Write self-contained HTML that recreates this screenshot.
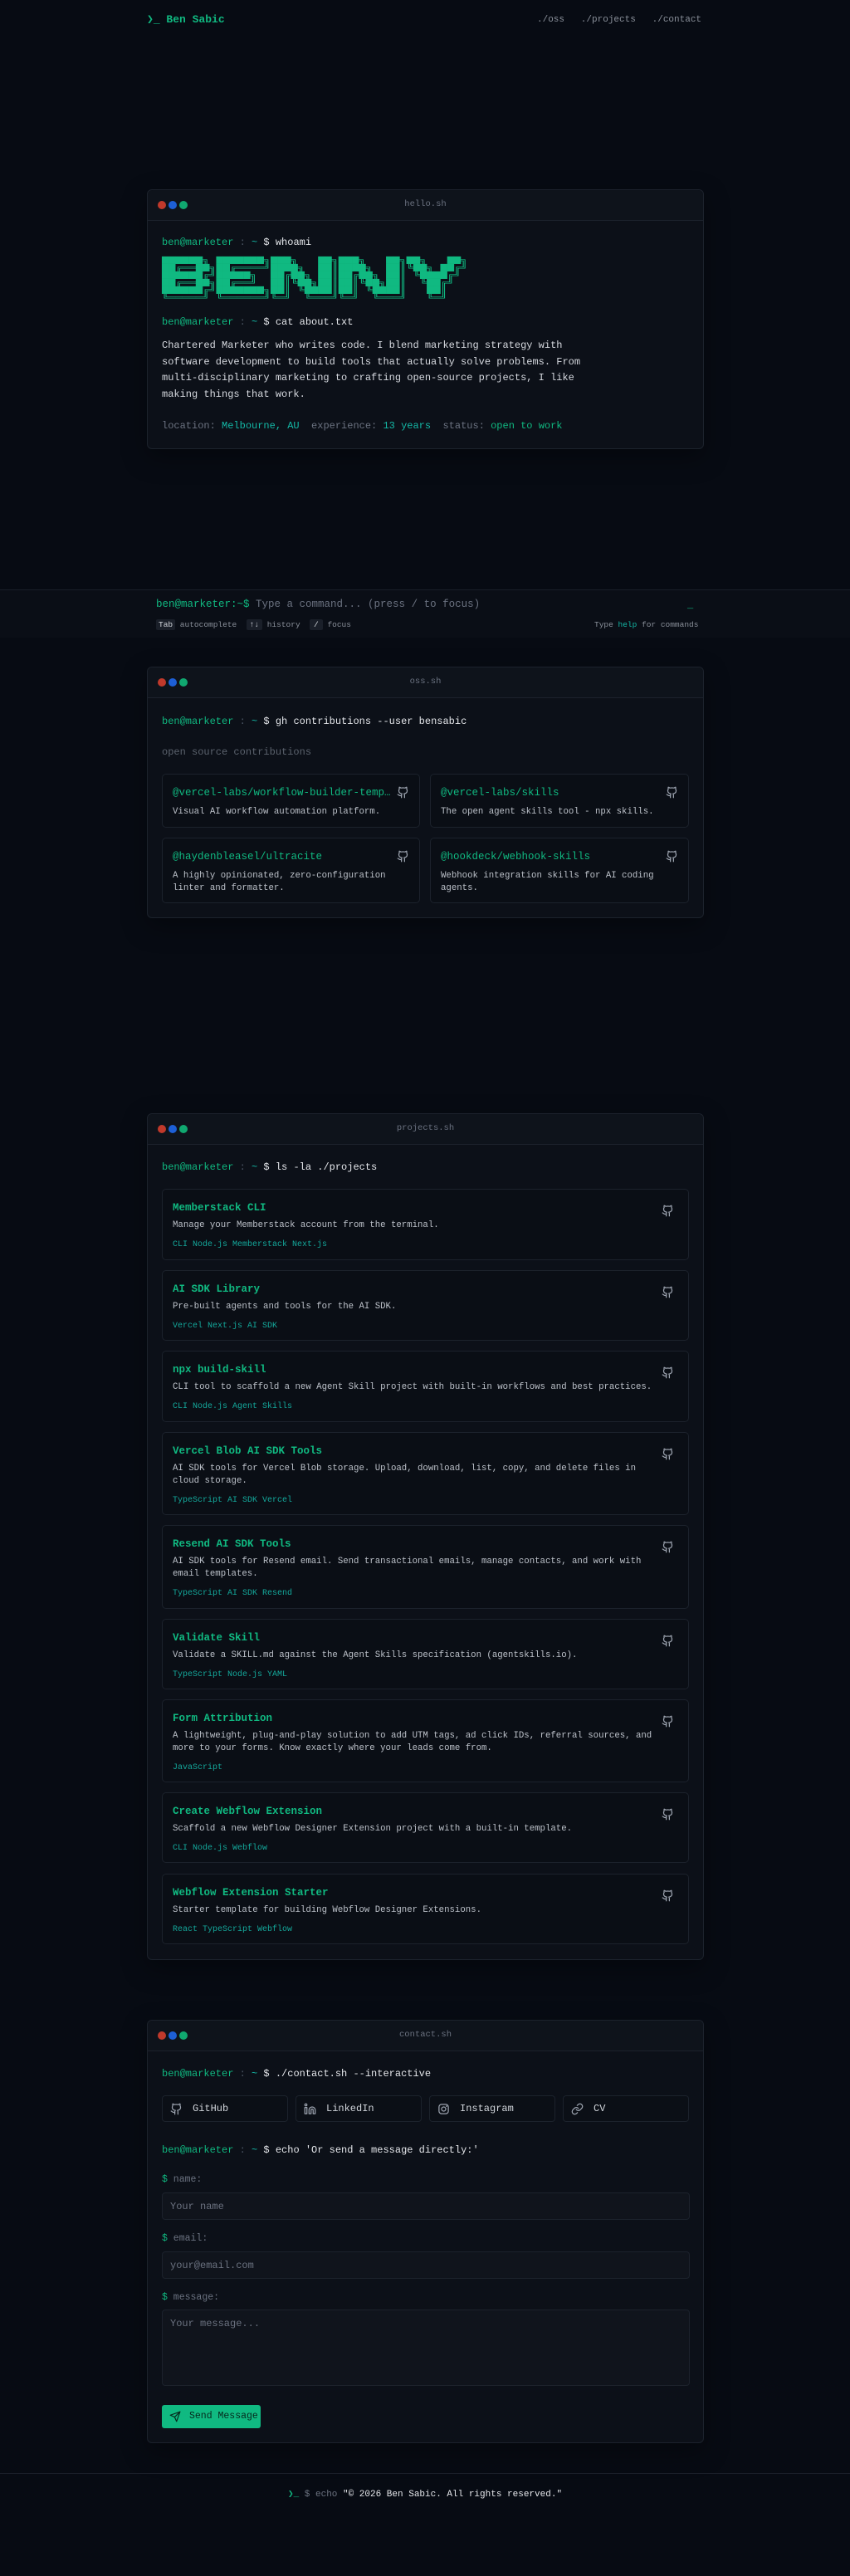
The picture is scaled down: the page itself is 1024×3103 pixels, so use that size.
<!DOCTYPE html>
<html><head><meta charset="utf-8">
<style>
*{box-sizing:border-box;margin:0;padding:0}
html,body{width:1024px;height:3103px;background:#070b13;overflow:hidden}
body{position:relative;font-family:"Liberation Mono","DejaVu Sans Mono",monospace;color:#d1d5db;font-size:12px}
.abs{position:absolute}
.g{color:#10b981}.t{color:#14b8a6}.m{color:#6b7280}.w{color:#e5e7eb}
.win{position:absolute;left:177px;width:671px;background:#0c1018;border:1px solid #1c222c;border-radius:6px;box-shadow:0 10px 30px rgba(0,0,0,.35)}
.bar{height:37px;border-bottom:1px solid #1c222c;background:#0e131b;border-radius:6px 6px 0 0;position:relative}
.dots{position:absolute;left:12px;top:13px;display:flex;gap:3px}
.dots i{width:10px;height:10px;border-radius:50%;display:block}
.bar .tt{position:absolute;left:0;right:0;top:11px;text-align:center;font-size:10.5px;color:#6b7280}
.pr{position:absolute;left:17px;font-size:12px;line-height:16px;white-space:pre}
.pr .s{color:#4b5563}
.card{position:absolute;border:1px solid #1c222c;border-radius:5px;background:#0a0e15}
.card .ti{position:absolute;left:12px;top:14px;font-size:12.5px;line-height:16px;font-weight:bold;color:#10b981;white-space:nowrap}
.card .de{position:absolute;left:12px;right:16px;top:36px;font-size:10.7px;line-height:15px;color:#bcc1c9}
.card .tg{position:absolute;left:12px;font-size:10px;line-height:14px;color:#14a89b}
.gh{position:absolute;width:15px;height:15px}
.lbl{position:absolute;left:17px;font-size:11.5px;color:#6b7280}
.lbl b{color:#10b981;font-weight:normal}
.inp{position:absolute;left:17px;width:636px;height:33px;border:1px solid #1c222c;border-radius:4px;background:#10141c;color:#6b7280;font-size:12px;padding:9px 9px}
.lnk{position:absolute;top:53px;width:152px;height:32px;border:1px solid #1c222c;border-radius:4px;background:#0b0f16;font-size:12px;color:#d1d5db;padding:8px 0 0 36px}
.lnk svg{position:absolute;left:9px;top:8px;width:15px;height:15px}
</style></head><body>

<div class="abs g" style="left:177px;top:16px;font-size:13px;font-weight:bold;line-height:16px">❯_ Ben Sabic</div>
<div class="abs m" style="left:647px;top:16px;font-size:11px;line-height:16px;color:#8b919b;white-space:pre">./oss   ./projects   ./contact</div>

<svg width="0" height="0" style="position:absolute"><defs>
<symbol id="ghi" viewBox="0 0 24 24"><g fill="none" stroke="#9ca3af" stroke-width="2" stroke-linecap="round" stroke-linejoin="round"><path d="M15 22v-4a4.8 4.8 0 0 0-1-3.5c3 0 6-2 6-5.5.08-1.25-.27-2.48-1-3.5.28-1.15.28-2.350 0-3.5 0 0-1 0-3 1.5-2.64-.5-5.36-.5-8 0C6 2 5 2 5 2c-.3 1.15-.3 2.35 0 3.5A5.403 5.403 0 0 0 4 9c0 3.5 3 5.5 6 5.5-.39.49-.68 1.05-.85 1.65-.17.6-.22 1.23-.15 1.85v4"/><path d="M9 18c-4.51 2-5-2-7-2"/></g></symbol>
</defs></svg>

<div class="win" style="top:228px;height:313px">
 <div class="bar"><div class="dots"><i style="background:#c0392b"></i><i style="background:#1d5fd6"></i><i style="background:#10a870"></i></div><div class="tt">hello.sh</div></div>
 <div class="pr" style="top:55px"><span class="g">ben@marketer</span><span class="s"> : </span><span class="t">~</span><span class="w"> $ whoami</span></div>
 <div style="position:absolute;left:17px;top:80px;height:54px;overflow:visible">
 <pre style="font-family:'DejaVu Sans Mono',monospace;font-size:13.6px;line-height:16px;color:#10b981;transform:scaleY(0.5625);transform-origin:top left;margin:0">██████╗ ███████╗███╗   ██╗███╗   ██╗██╗   ██╗
██╔══██╗██╔════╝████╗  ██║████╗  ██║╚██╗ ██╔╝
██████╔╝█████╗  ██╔██╗ ██║██╔██╗ ██║ ╚████╔╝ 
██╔══██╗██╔══╝  ██║╚██╗██║██║╚██╗██║  ╚██╔╝  
██████╔╝███████╗██║ ╚████║██║ ╚████║   ██║   
╚═════╝ ╚══════╝╚═╝  ╚═══╝╚═╝  ╚═══╝   ╚═╝   </pre></div>
 <div class="pr" style="top:151px"><span class="g">ben@marketer</span><span class="s"> : </span><span class="t">~</span><span class="w"> $ cat about.txt</span></div>
 <div style="position:absolute;left:17px;top:178px;width:530px;font-size:12px;line-height:19.5px;color:#d7dae0">Chartered Marketer who writes code. I blend marketing strategy with software development to build tools that actually solve problems. From multi-disciplinary marketing to crafting open-source projects, I like making things that work.</div>
 <div class="pr" style="top:276px;font-size:12px"><span class="m">location: </span><span class="t">Melbourne, AU</span><span class="m">  experience: </span><span class="t">13 years</span><span class="m">  status: </span><span class="g">open to work</span></div>
</div>

<div class="abs" style="left:0;top:710px;width:1024px;height:58px;background:#0a0e16;border-top:1px solid #1a1f29"></div>
<div class="abs" style="left:188px;top:720px;font-size:12.5px;line-height:16px;white-space:pre"><span class="g">ben@marketer:~$</span><span class="m"> Type a command... (press / to focus)</span></div>
<div class="abs g" style="left:828px;top:722px;font-size:12px">_</div>
<div class="abs" style="left:188px;top:745px;font-size:9.5px;line-height:16px;color:#8b919b;white-space:pre"><span style="background:#1a1f29;color:#d1d5db;padding:1px 3px;border-radius:2px">Tab</span> autocomplete  <span style="background:#1a1f29;color:#d1d5db;padding:1px 4px;border-radius:2px">↑↓</span> history  <span style="background:#1a1f29;color:#d1d5db;padding:1px 5px;border-radius:2px">/</span> focus</div>
<div class="abs" style="left:716px;top:745px;font-size:9.5px;line-height:16px;color:#8b919b;white-space:pre">Type <span class="t">help</span> for commands</div>

<div class="win" style="top:803px;height:303px">
 <div class="bar"><div class="dots"><i style="background:#c0392b"></i><i style="background:#1d5fd6"></i><i style="background:#10a870"></i></div><div class="tt">oss.sh</div></div>
 <div class="pr" style="top:57px"><span class="g">ben@marketer</span><span class="s"> : </span><span class="t">~</span><span class="w"> $ gh contributions --user bensabic</span></div>
 <div class="pr m" style="top:94px;color:#5b626d">open source contributions</div>
 <div class="card" style="left:17px;top:128px;width:311px;height:65px"><div class="ti" style="font-weight:normal">@vercel-labs/workflow-builder-temp…</div><div class="de" style="top:38px;right:8px">Visual AI workflow automation platform.</div><svg class="gh" style="right:12px;top:14px"><use href="#ghi"/></svg></div>
 <div class="card" style="left:340px;top:128px;width:312px;height:65px"><div class="ti" style="font-weight:normal">@vercel-labs/skills</div><div class="de" style="top:38px;right:8px">The open agent skills tool - npx skills.</div><svg class="gh" style="right:12px;top:14px"><use href="#ghi"/></svg></div>
 <div class="card" style="left:17px;top:205px;width:311px;height:79px"><div class="ti" style="font-weight:normal">@haydenbleasel/ultracite</div><div class="de" style="top:38px;right:8px">A highly opinionated, zero-configuration linter and formatter.</div><svg class="gh" style="right:12px;top:14px"><use href="#ghi"/></svg></div>
 <div class="card" style="left:340px;top:205px;width:312px;height:79px"><div class="ti" style="font-weight:normal">@hookdeck/webhook-skills</div><div class="de" style="top:38px;right:40px">Webhook integration skills for AI coding agents.</div><svg class="gh" style="right:12px;top:14px"><use href="#ghi"/></svg></div>
</div>

<div class="win" style="top:1341px;height:1020px">
 <div class="bar"><div class="dots"><i style="background:#c0392b"></i><i style="background:#1d5fd6"></i><i style="background:#10a870"></i></div><div class="tt">projects.sh</div></div>
 <div class="pr" style="top:56px"><span class="g">ben@marketer</span><span class="s"> : </span><span class="t">~</span><span class="w"> $ ls -la ./projects</span></div>

 <div class="card" style="left:17px;top:90px;width:635px;height:86px"><div class="ti">Memberstack CLI</div><div class="de">Manage your Memberstack account from the terminal.</div><div class="tg" style="top:60px">CLI Node.js Memberstack Next.js</div><svg class="gh" style="right:17px;top:18px"><use href="#ghi"/></svg></div>
 <div class="card" style="left:17px;top:188px;width:635px;height:85px"><div class="ti">AI SDK Library</div><div class="de">Pre-built agents and tools for the AI SDK.</div><div class="tg" style="top:60px">Vercel Next.js AI SDK</div><svg class="gh" style="right:17px;top:18px"><use href="#ghi"/></svg></div>
 <div class="card" style="left:17px;top:285px;width:635px;height:86px"><div class="ti">npx build-skill</div><div class="de" style="right:4px;white-space:nowrap">CLI tool to scaffold a new Agent Skill project with built-in workflows and best practices.</div><div class="tg" style="top:60px">CLI Node.js Agent Skills</div><svg class="gh" style="right:17px;top:18px"><use href="#ghi"/></svg></div>
 <div class="card" style="left:17px;top:383px;width:635px;height:100px"><div class="ti">Vercel Blob AI SDK Tools</div><div class="de" style="right:50px">AI SDK tools for Vercel Blob storage. Upload, download, list, copy, and delete files in cloud storage.</div><div class="tg" style="top:75px">TypeScript AI SDK Vercel</div><svg class="gh" style="right:17px;top:18px"><use href="#ghi"/></svg></div>
 <div class="card" style="left:17px;top:495px;width:635px;height:101px"><div class="ti">Resend AI SDK Tools</div><div class="de" style="right:40px">AI SDK tools for Resend email. Send transactional emails, manage contacts, and work with email templates.</div><div class="tg" style="top:75px">TypeScript AI SDK Resend</div><svg class="gh" style="right:17px;top:18px"><use href="#ghi"/></svg></div>
 <div class="card" style="left:17px;top:608px;width:635px;height:85px"><div class="ti">Validate Skill</div><div class="de">Validate a SKILL.md against the Agent Skills specification (agentskills.io).</div><div class="tg" style="top:60px">TypeScript Node.js YAML</div><svg class="gh" style="right:17px;top:18px"><use href="#ghi"/></svg></div>
 <div class="card" style="left:17px;top:705px;width:635px;height:100px"><div class="ti">Form Attribution</div><div class="de" style="right:30px">A lightweight, plug-and-play solution to add UTM tags, ad click IDs, referral sources, and more to your forms. Know exactly where your leads come from.</div><div class="tg" style="top:75px">JavaScript</div><svg class="gh" style="right:17px;top:18px"><use href="#ghi"/></svg></div>
 <div class="card" style="left:17px;top:817px;width:635px;height:85px"><div class="ti">Create Webflow Extension</div><div class="de">Scaffold a new Webflow Designer Extension project with a built-in template.</div><div class="tg" style="top:60px">CLI Node.js Webflow</div><svg class="gh" style="right:17px;top:18px"><use href="#ghi"/></svg></div>
 <div class="card" style="left:17px;top:915px;width:635px;height:85px"><div class="ti">Webflow Extension Starter</div><div class="de">Starter template for building Webflow Designer Extensions.</div><div class="tg" style="top:60px">React TypeScript Webflow</div><svg class="gh" style="right:17px;top:18px"><use href="#ghi"/></svg></div>
</div>

<div class="win" style="top:2433px;height:510px">
 <div class="bar"><div class="dots"><i style="background:#c0392b"></i><i style="background:#1d5fd6"></i><i style="background:#10a870"></i></div><div class="tt">contact.sh</div></div>
 <div class="pr" style="top:56px"><span class="g">ben@marketer</span><span class="s"> : </span><span class="t">~</span><span class="w"> $ ./contact.sh --interactive</span></div>
 <div class="lnk" style="left:17px;top:90px"><svg viewBox="0 0 24 24"><use href="#ghi"/></svg>GitHub</div>
 <div class="lnk" style="left:178px;top:90px"><svg viewBox="0 0 24 24" fill="none" stroke="#9ca3af" stroke-width="2" stroke-linecap="round" stroke-linejoin="round"><path d="M16 8a6 6 0 0 1 6 6v7h-4v-7a2 2 0 0 0-4 0v7h-4v-7a6 6 0 0 1 6-6z"/><rect x="2" y="9" width="4" height="12"/><circle cx="4" cy="4" r="2"/></svg>LinkedIn</div>
 <div class="lnk" style="left:339px;top:90px"><svg viewBox="0 0 24 24" fill="none" stroke="#9ca3af" stroke-width="2" stroke-linecap="round" stroke-linejoin="round"><rect x="3" y="3" width="18" height="18" rx="5"/><circle cx="12" cy="12" r="4"/><circle cx="17.5" cy="6.5" r=".5"/></svg>Instagram</div>
 <div class="lnk" style="left:500px;top:90px"><svg viewBox="0 0 24 24" fill="none" stroke="#9ca3af" stroke-width="2" stroke-linecap="round" stroke-linejoin="round"><path d="M10 13a5 5 0 0 0 7.54.54l3-3a5 5 0 0 0-7.07-7.07l-1.72 1.71"/><path d="M14 11a5 5 0 0 0-7.54-.54l-3 3a5 5 0 0 0 7.07 7.07l1.71-1.71"/></svg>CV</div>
 <div class="pr" style="top:148px"><span class="g">ben@marketer</span><span class="s"> : </span><span class="t">~</span><span class="w"> $ echo 'Or send a message directly:'</span></div>
 <div class="lbl" style="top:185px"><b>$</b> name:</div>
 <div class="inp" style="top:207px">Your name</div>
 <div class="lbl" style="top:256px"><b>$</b> email:</div>
 <div class="inp" style="top:278px">your@email.com</div>
 <div class="lbl" style="top:327px"><b>$</b> message:</div>
 <div class="inp" style="top:348px;height:92px">Your message...</div>
 <div style="position:absolute;left:17px;top:463px;width:119px;height:28px;background:#10b981;border-radius:3px;color:#06281c;font-size:11.5px;padding:7px 0 0 33px">
  <svg style="position:absolute;left:9px;top:7px" width="14" height="14" viewBox="0 0 24 24" fill="none" stroke="#06281c" stroke-width="2" stroke-linecap="round" stroke-linejoin="round"><path d="M22 2 11 13"/><path d="M22 2 15 22l-4-9-9-4 20-7z"/></svg>Send Message</div>
</div>

<div class="abs" style="left:0;top:2979px;width:1024px;height:1px;background:#1a1f29"></div>
<div class="abs" style="left:0;top:2997px;width:1024px;text-align:center;font-size:11px;line-height:16px;white-space:pre"><span class="g">❯_</span><span class="m"> $ echo </span><span class="w">"© 2026 Ben Sabic. All rights reserved."</span></div>

</body></html>
